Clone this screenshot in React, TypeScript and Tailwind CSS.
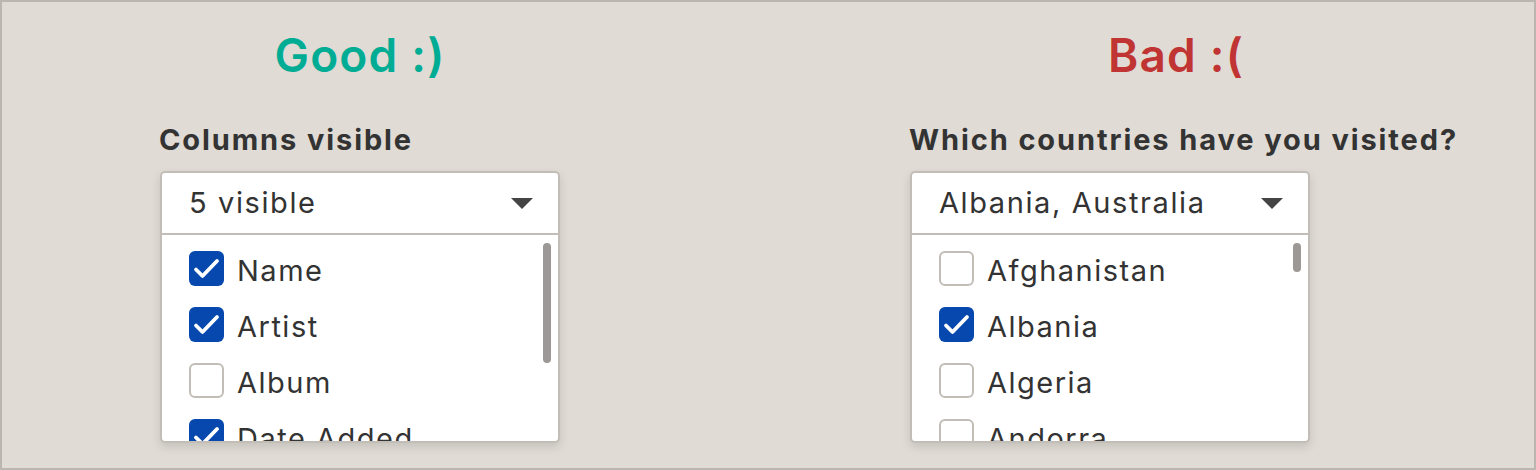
import React from "react";

type Item = { label: string; checked: boolean };

const font = { fontFamily: "Inter, 'Noto Sans', sans-serif" };

function Check(props: { checked: boolean }) {
  if (!props.checked) {
    return (
      <span className="w-[35px] h-[35px] rounded-[6px] border-2 border-[#c2bdb7] bg-white shrink-0 box-border" />
    );
  }
  return (
    <span className="w-[35px] h-[35px] rounded-[6px] bg-[#0748ae] shrink-0 block">
      <svg width="35" height="35" viewBox="0 0 35 35" fill="none">
        <path
          d="M7 18.5 L13.5 25 L28 10"
          stroke="white"
          strokeWidth="3.8"
          strokeLinecap="round"
          strokeLinejoin="round"
        />
      </svg>
    </span>
  );
}

function MultiSelect(props: {
  title: string;
  titleColor: string;
  label: string;
  value: string;
  items: Item[];
  width: string;
  thumb: string;
}) {
  return (
    <div className={`flex flex-col ${props.width}`}>
      <h2
        className={`text-[46px] leading-none font-semibold text-center tracking-[1.2px] mt-[30px] ${props.titleColor}`}
      >
        {props.title}
      </h2>
      <label className="text-[29px] font-bold text-[#333] leading-none tracking-[1.9px] whitespace-nowrap mt-[47px]">
        {props.label}
      </label>
      <div className="w-[400px] ml-[1px] mt-[17px] rounded-[5px] border-2 border-[#c2bdb7] bg-white shadow-[0_4px_10px_rgba(0,0,0,0.12)] overflow-hidden">
        <div className="h-[62px] flex items-center justify-between pl-[27px] pr-[25px] border-b-2 border-[#c2bdb7]">
          <span className="text-[29px] text-[#333] tracking-[1.6px]">{props.value}</span>
          <svg width="22" height="11" viewBox="0 0 22 11">
            <path d="M0 0 H22 L11 11 Z" fill="#444" />
          </svg>
        </div>
        <div className="relative h-[206px] overflow-hidden">
          <div className="flex flex-col gap-[21px] pt-[16px] pl-[27px]">
            {props.items.map((it, i) => (
              <div key={i} className="flex items-center gap-[13px] h-[35px]">
                <Check checked={it.checked} />
                <span className="text-[29px] text-[#333] tracking-[1.5px] leading-none pt-[3px]">
                  {it.label}
                </span>
              </div>
            ))}
          </div>
          <div
            className={`absolute right-[7px] top-[8px] w-[8px] rounded-full bg-[#9b9895] ${props.thumb}`}
          />
        </div>
      </div>
    </div>
  );
}

export default function App() {
  return (
    <div
      className="w-[1536px] h-[470px] bg-[#e0dbd5] border-2 border-[#bbb6b0] box-border flex"
      style={font}
    >
      <div className="pl-[157px]">
        <MultiSelect
          title="Good :)"
          titleColor="text-[#00ad94]"
          label="Columns visible"
          value="5 visible"
          width="w-[402px]"
          thumb="h-[120px]"
          items={[
            { label: "Name", checked: true },
            { label: "Artist", checked: true },
            { label: "Album", checked: false },
            { label: "Date Added", checked: true },
          ]}
        />
      </div>
      <div className="pl-[348px]">
        <MultiSelect
          title="Bad :("
          titleColor="text-[#c03533]"
          label="Which countries have you visited?"
          value="Albania, Australia"
          width="w-[534px]"
          thumb="h-[29px]"
          items={[
            { label: "Afghanistan", checked: false },
            { label: "Albania", checked: true },
            { label: "Algeria", checked: false },
            { label: "Andorra", checked: false },
          ]}
        />
      </div>
    </div>
  );
}
